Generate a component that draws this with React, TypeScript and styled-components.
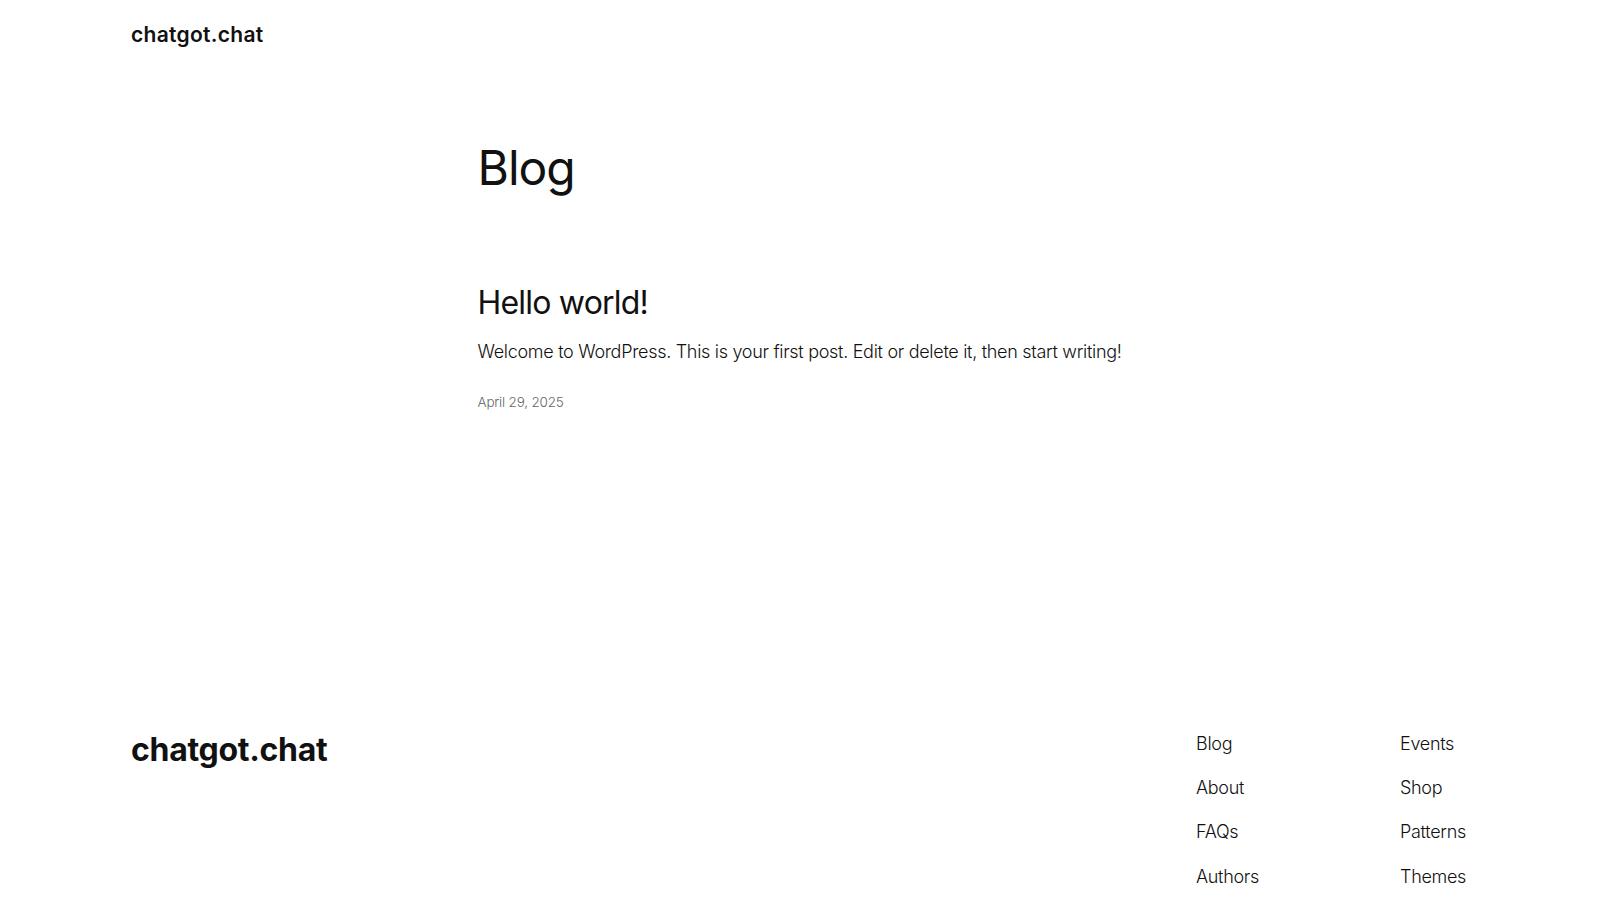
import React from "react";
import styled, { createGlobalStyle } from "styled-components";

const GlobalStyle = createGlobalStyle`
  html, body {
    margin: 0;
    padding: 0;
    background: #ffffff;
  }
  body {
    font-family: Inter, "Noto Sans", "Liberation Sans", sans-serif;
    color: #111111;
    -webkit-font-smoothing: antialiased;
  }
  a {
    color: inherit;
    text-decoration: none;
  }
`;

const navLeft = ["Blog", "About", "FAQs", "Authors"];
const navRight = ["Events", "Shop", "Patterns", "Themes"];

export default function App() {
  return (
    <Page>
      <GlobalStyle />
      <Header>
        <SiteTitle href="#">chatgot.chat</SiteTitle>
      </Header>
      <Main>
        <PageTitle>Blog</PageTitle>
        <Post>
          <PostTitle>
            <a href="#">Hello world!</a>
          </PostTitle>
          <Excerpt>
            Welcome to WordPress. This is your first post. Edit or delete it,
            then start writing!
          </Excerpt>
          <PostDate>April 29, 2025</PostDate>
        </Post>
      </Main>
      <Footer>
        <FooterTitle href="#">chatgot.chat</FooterTitle>
        <FooterNav>
          <NavColumn $width={204}>
            {navLeft.map((item) => (
              <NavLink key={item} href="#">
                {item}
              </NavLink>
            ))}
          </NavColumn>
          <NavColumn $width={69}>
            {navRight.map((item) => (
              <NavLink key={item} href="#">
                {item}
              </NavLink>
            ))}
          </NavColumn>
        </FooterNav>
      </Footer>
    </Page>
  );
}

const Page = styled.div`
  min-height: 100vh;
  display: flex;
  flex-direction: column;
`;

const Header = styled.header`
  height: 68px;
  padding: 0 131px;
  display: flex;
  align-items: center;
`;

const SiteTitle = styled.a`
  font-size: 21px;
  font-weight: 600;
  letter-spacing: 0.3px;
  line-height: 1;
`;

const Main = styled.main`
  width: 645px;
  margin: 71px auto 0;
`;

const PageTitle = styled.h1`
  margin: 0;
  font-size: 48px;
  font-weight: 400;
  line-height: 1.2;
  letter-spacing: -1px;
`;

const Post = styled.article`
  margin-top: 87px;
  display: flex;
  flex-direction: column;
`;

const PostTitle = styled.h2`
  margin: 0;
  font-size: 32px;
  font-weight: 400;
  line-height: 1.2;
  letter-spacing: -0.8px;
`;

const Excerpt = styled.p`
  margin: 16px 0 0;
  font-size: 18px;
  font-weight: 300;
  line-height: 1.5;
  letter-spacing: -0.3px;
`;

const PostDate = styled.time`
  margin-top: 29px;
  font-size: 13.5px;
  font-weight: 300;
  color: #666666;
  letter-spacing: -0.2px;
`;

const Footer = styled.footer`
  margin-top: 321px;
  padding: 0 131px 40px;
  display: flex;
  justify-content: space-between;
  align-items: flex-start;
`;

const FooterTitle = styled.a`
  font-size: 32px;
  font-weight: 700;
  letter-spacing: -0.3px;
  line-height: 1.2;
`;

const FooterNav = styled.nav`
  display: flex;
`;

const NavColumn = styled.div<{ $width: number }>`
  width: ${(p) => p.$width}px;
  display: flex;
  flex-direction: column;
  gap: 19px;
`;

const NavLink = styled.a`
  font-size: 18px;
  font-weight: 300;
  line-height: 1.4;
  letter-spacing: -0.3px;
  white-space: nowrap;
`;
